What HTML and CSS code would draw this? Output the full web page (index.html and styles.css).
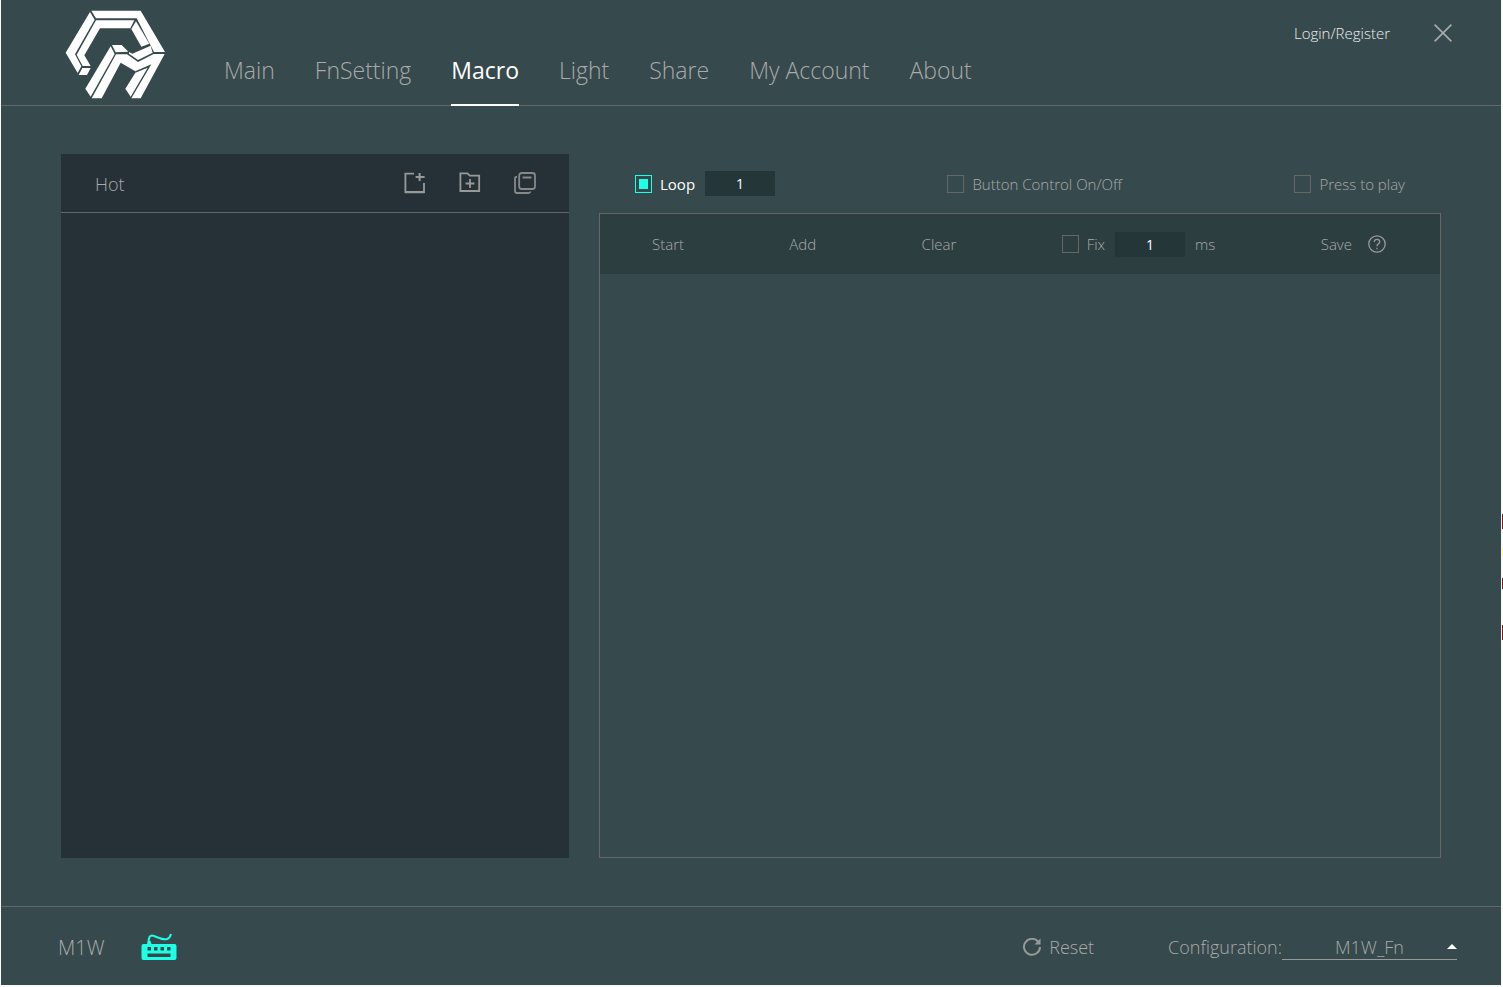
FILE: index.html
```
<!DOCTYPE html>
<html lang="en">
<head>
  <meta charset="UTF-8" />
  <title>Macro - M1W</title>
  <meta name="viewport" content="width=device-width, initial-scale=1.0"/>
  <link rel="stylesheet" href="styles.css">
</head>
<body>

<div class="app">
  <header class="header">
    <svg class="logo" viewBox="44 32 303 267" fill="#fff" aria-label="Logo" role="img">
      <path d="M123 34H271L344 158H311L259 57H137Z"/>
      <path d="M119 38L133 61L74 165L93 201L82 221L46 160Z"/>
      <path d="M137 63H252L240 87H149L102 168L121 200H97L79 166Z"/>
      <path d="M96 206H121L110 227H85Z"/>
      <path d="M257 66L297 133L273 142L243 89Z"/>
      <path d="M185 137H214L234 157L196 159Z"/>
      <path d="M181 141L193 164L121 292L105 268Z"/>
      <path d="M197 165H230L263 188L310 164H343L271 297H243L303 195L255 216L211 190L154 297H124Z"/>
      <path d="M236 158L246 163L301 139L307 160L263 182L236 163Z"/>
      <path d="M292 205L241 292L225 268L255 220Z"/>
    </svg>

    <nav class="nav">
      <a href="#main">Main</a>
      <a href="#fnsetting">FnSetting</a>
      <a href="#macro" class="active">Macro</a>
      <a href="#light">Light</a>
      <a href="#share">Share</a>
      <a href="#account">My Account</a>
      <a href="#about">About</a>
    </nav>

    <div class="user">
      <a href="#login">Login/Register</a>
      <button type="button" class="icon-btn" aria-label="Close">
        <svg width="18" height="18" viewBox="0 0 18 18" fill="none" stroke="#aaa" stroke-width="1.6"><path d="M.6.6L17.4 17.4M17.4.6L.6 17.4"/></svg>
      </button>
    </div>
  </header>

  <main class="content">
    <section class="macros">
      <div class="macros-head">
        <h2>Hot</h2>
        <div class="macros-tools">
          <button type="button" class="icon-btn" aria-label="New macro">
            <svg width="22" height="22" viewBox="0 0 22 22" fill="none" stroke="#999"><path stroke-width="1.8" d="M10 1.6H1.4V20H20V11"/><path stroke-width="2" d="M1 20.2H20.6M15.6 1V9M11.6 5H20.6"/></svg>
          </button>
          <button type="button" class="icon-btn" aria-label="New folder">
            <svg width="22" height="22" viewBox="0 0 22 22" fill="none" stroke="#999" stroke-width="1.8"><path d="M1.4 1.4H8.4L10.8 3.6H20.2V19H1.4ZM11 7V16M6.6 11.5H15.4"/></svg>
          </button>
          <button type="button" class="icon-btn" aria-label="Copy">
            <svg width="22" height="22" viewBox="0 0 22 22" fill="none" stroke="#888" stroke-width="1.8"><rect x="5.2" y="1" width="15.8" height="16" rx="2.5"/><path d="M3 5H2Q1 5 1 6.500V19Q1 21 3 21H14.500Q16 21 16.500 19.500"/><path stroke-width="2" d="M8.500 5.500H17.500"/></svg>
          </button>
        </div>
      </div>
    </section>

    <section class="editor">
      <div class="options">
        <div class="field">
          <label class="check on"><input type="checkbox" checked>Loop</label>
          <input type="text" class="number" value="1" aria-label="Loop count">
        </div>
        <label class="check"><input type="checkbox">Button Control On/Off</label>
        <label class="check"><input type="checkbox">Press to play</label>
      </div>

      <div class="board">
        <div class="toolbar">
          <button type="button">Start</button>
          <button type="button">Add</button>
          <button type="button">Clear</button>
          <div class="field">
            <label class="check"><input type="checkbox">Fix</label>
            <input type="text" class="number" id="fixDelay" value="1" aria-label="Fixed delay">
            <label for="fixDelay">ms</label>
          </div>
          <div class="save">
            <button type="button">Save</button>
            <button type="button" class="icon-btn" aria-label="Help">
              <svg width="18" height="18" viewBox="0 0 18 18" fill="none" stroke="#999" stroke-width="1.3"><circle cx="9" cy="9" r="8.2"/><path d="M6.300 7Q6.300 4.300 9 4.300T11.700 6.800Q11.700 8 10.300 8.900Q9 9.700 9 11.300M9 12.700V14.200"/></svg>
            </button>
          </div>
        </div>
      </div>
    </section>
  </main>

  <footer class="footer">
    <span class="device">M1W</span>
    <svg class="keyboard" width="36" height="28" viewBox="0 0 36 28" fill="none">
      <path stroke="#1fffe6" stroke-width="2" d="M7.500 10C7.500 4 9 1.500 13 3C18 5 22 7 26 6Q29 5 30 1"/>
      <path fill="#1fffe6" fill-rule="evenodd" d="M6 11L7 8H9.500L10.500 11H33.500Q35.500 11 35.500 13V25Q35.500 27 33.500 27H2.500Q.5 27 .5 25V13Q.5 11 2.500 11ZM6.500 14V17.500H10V14ZM13 14V17.500H16.500V14ZM19.500 14V17.500H23V14ZM26 14V17.500H29.500V14ZM6.500 20.500V24H29.500V20.500Z"/>
    </svg>

    <button type="button" class="reset">
      <svg width="18" height="18" viewBox="1 1 18 18"><path fill="none" stroke="#999" stroke-width="2" d="M16 4.500A8 8 0 1 0 18 10"/><path fill="#999" d="M18.500 1.500V7.500H12.500Z"/></svg>
      Reset
    </button>

    <label for="config">Configuration:</label>
    <div class="select">
      <select id="config">
        <option>M1W_Fn</option>
      </select>
    </div>
  </footer>
</div>

</body>
</html>
```
FILE: styles.css
```
* { box-sizing: border-box; }

body {
  margin: 0;
  padding: 0 2px 2px 1px;
  background:
    linear-gradient(#7a1a1a, #7a1a1a) right 514px / 1px 15px no-repeat,
    linear-gradient(#ffff88, #ffff88) right 548px / 1px 8px no-repeat,
    linear-gradient(#7a1a1a, #7a1a1a) right 578px / 1px 11px no-repeat,
    linear-gradient(#7a1a1a, #7a1a1a) right 625px / 1px 15px no-repeat,
    #f8fafa;
  font-family: 'Open Sans', 'Noto Sans', sans-serif;
  font-size: 15px;
  font-weight: 300;
  color: #aaa;
}

a {
  color: inherit;
  text-decoration: none;
}

button, input, select {
  font: inherit;
  color: inherit;
}

button {
  padding: 0;
  border: none;
  background: none;
  cursor: pointer;
}

svg {
  display: block;
}

.app {
  display: flex;
  flex-direction: column;
  min-height: calc(100vh - 2px);
  background: #36494c;
}

/* Header */
.header {
  display: flex;
  height: 106px;
  padding: 0 49px 0 64px;
  border-bottom: 1px solid #666;
}

.logo {
  width: 101px;
  height: 89px;
  margin-top: 10px;
}

.nav {
  display: flex;
  gap: 40px;
  margin-left: 58px;
  font-size: 23px;
}

.nav a {
  height: 106px;
  padding-top: 53px;
  line-height: 34px;
  white-space: nowrap;
}

.nav .active {
  color: #fff;
  font-weight: 400;
  border-bottom: 2px solid #fff;
}

.user {
  display: flex;
  align-items: center;
  gap: 44px;
  height: 66px;
  margin-left: auto;
  color: #eee;
}

/* Content */
.content {
  flex: 1;
  display: grid;
  grid-template-columns: 508fr 842fr;
  gap: 30px;
  padding: 48px 60px;
}

.macros {
  background: #253136;
}

.macros-head {
  display: flex;
  align-items: center;
  justify-content: space-between;
  height: 59px;
  padding: 0 33px 0 34px;
  border-bottom: 1px solid #666;
}

.macros-head h2 {
  margin: 0;
  padding-top: 2px;
  font-size: 18px;
  font-weight: 300;
}

.macros-tools {
  display: flex;
  gap: 33px;
}

.editor {
  display: flex;
  flex-direction: column;
}

.options {
  display: flex;
  align-items: center;
  justify-content: space-between;
  height: 59px;
  padding: 0 36px;
}

.field {
  display: flex;
  align-items: center;
  gap: 10px;
}

.check {
  display: flex;
  align-items: center;
  gap: 8px;
}

.check input {
  appearance: none;
  width: 17px;
  height: 18px;
  margin: 0;
  border: 1px solid #666;
}

.check input:checked {
  padding: 3px;
  border-color: #1fffe6;
  background: #1fffe6 content-box;
}

.on {
  color: #fff;
  font-weight: 400;
}

.number {
  width: 70px;
  height: 25px;
  padding: 0;
  border: none;
  background: #253639;
  color: #fff;
  font-size: 14px;
  font-weight: 400;
  text-align: center;
}

.board {
  flex: 1;
  border: 1px solid #666;
}

.toolbar {
  display: flex;
  align-items: center;
  justify-content: space-between;
  height: 60px;
  padding: 0 54px 0 52px;
  background: #2d3e41;
}

.save {
  display: flex;
  align-items: center;
  gap: 16px;
}

/* Footer */
.footer {
  display: flex;
  align-items: center;
  height: 79px;
  padding: 2px 44px 0 57px;
  border-top: 1px solid #666;
  font-size: 18px;
}

.device {
  font-size: 20px;
}

.keyboard {
  margin-left: 36px;
}

.reset {
  display: flex;
  align-items: center;
  gap: 8px;
  margin-left: auto;
  margin-right: 74px;
}

.select {
  position: relative;
}

.select select {
  appearance: none;
  display: block;
  width: 175px;
  height: 26px;
  padding: 0;
  border: none;
  border-bottom: 1px solid #999;
  border-radius: 0;
  background: none;
  text-align-last: center;
}

.select::after {
  content: "";
  position: absolute;
  right: 0;
  top: 10px;
  border: 5px solid transparent;
  border-top: none;
  border-bottom-color: #fff;
  pointer-events: none;
}
```
